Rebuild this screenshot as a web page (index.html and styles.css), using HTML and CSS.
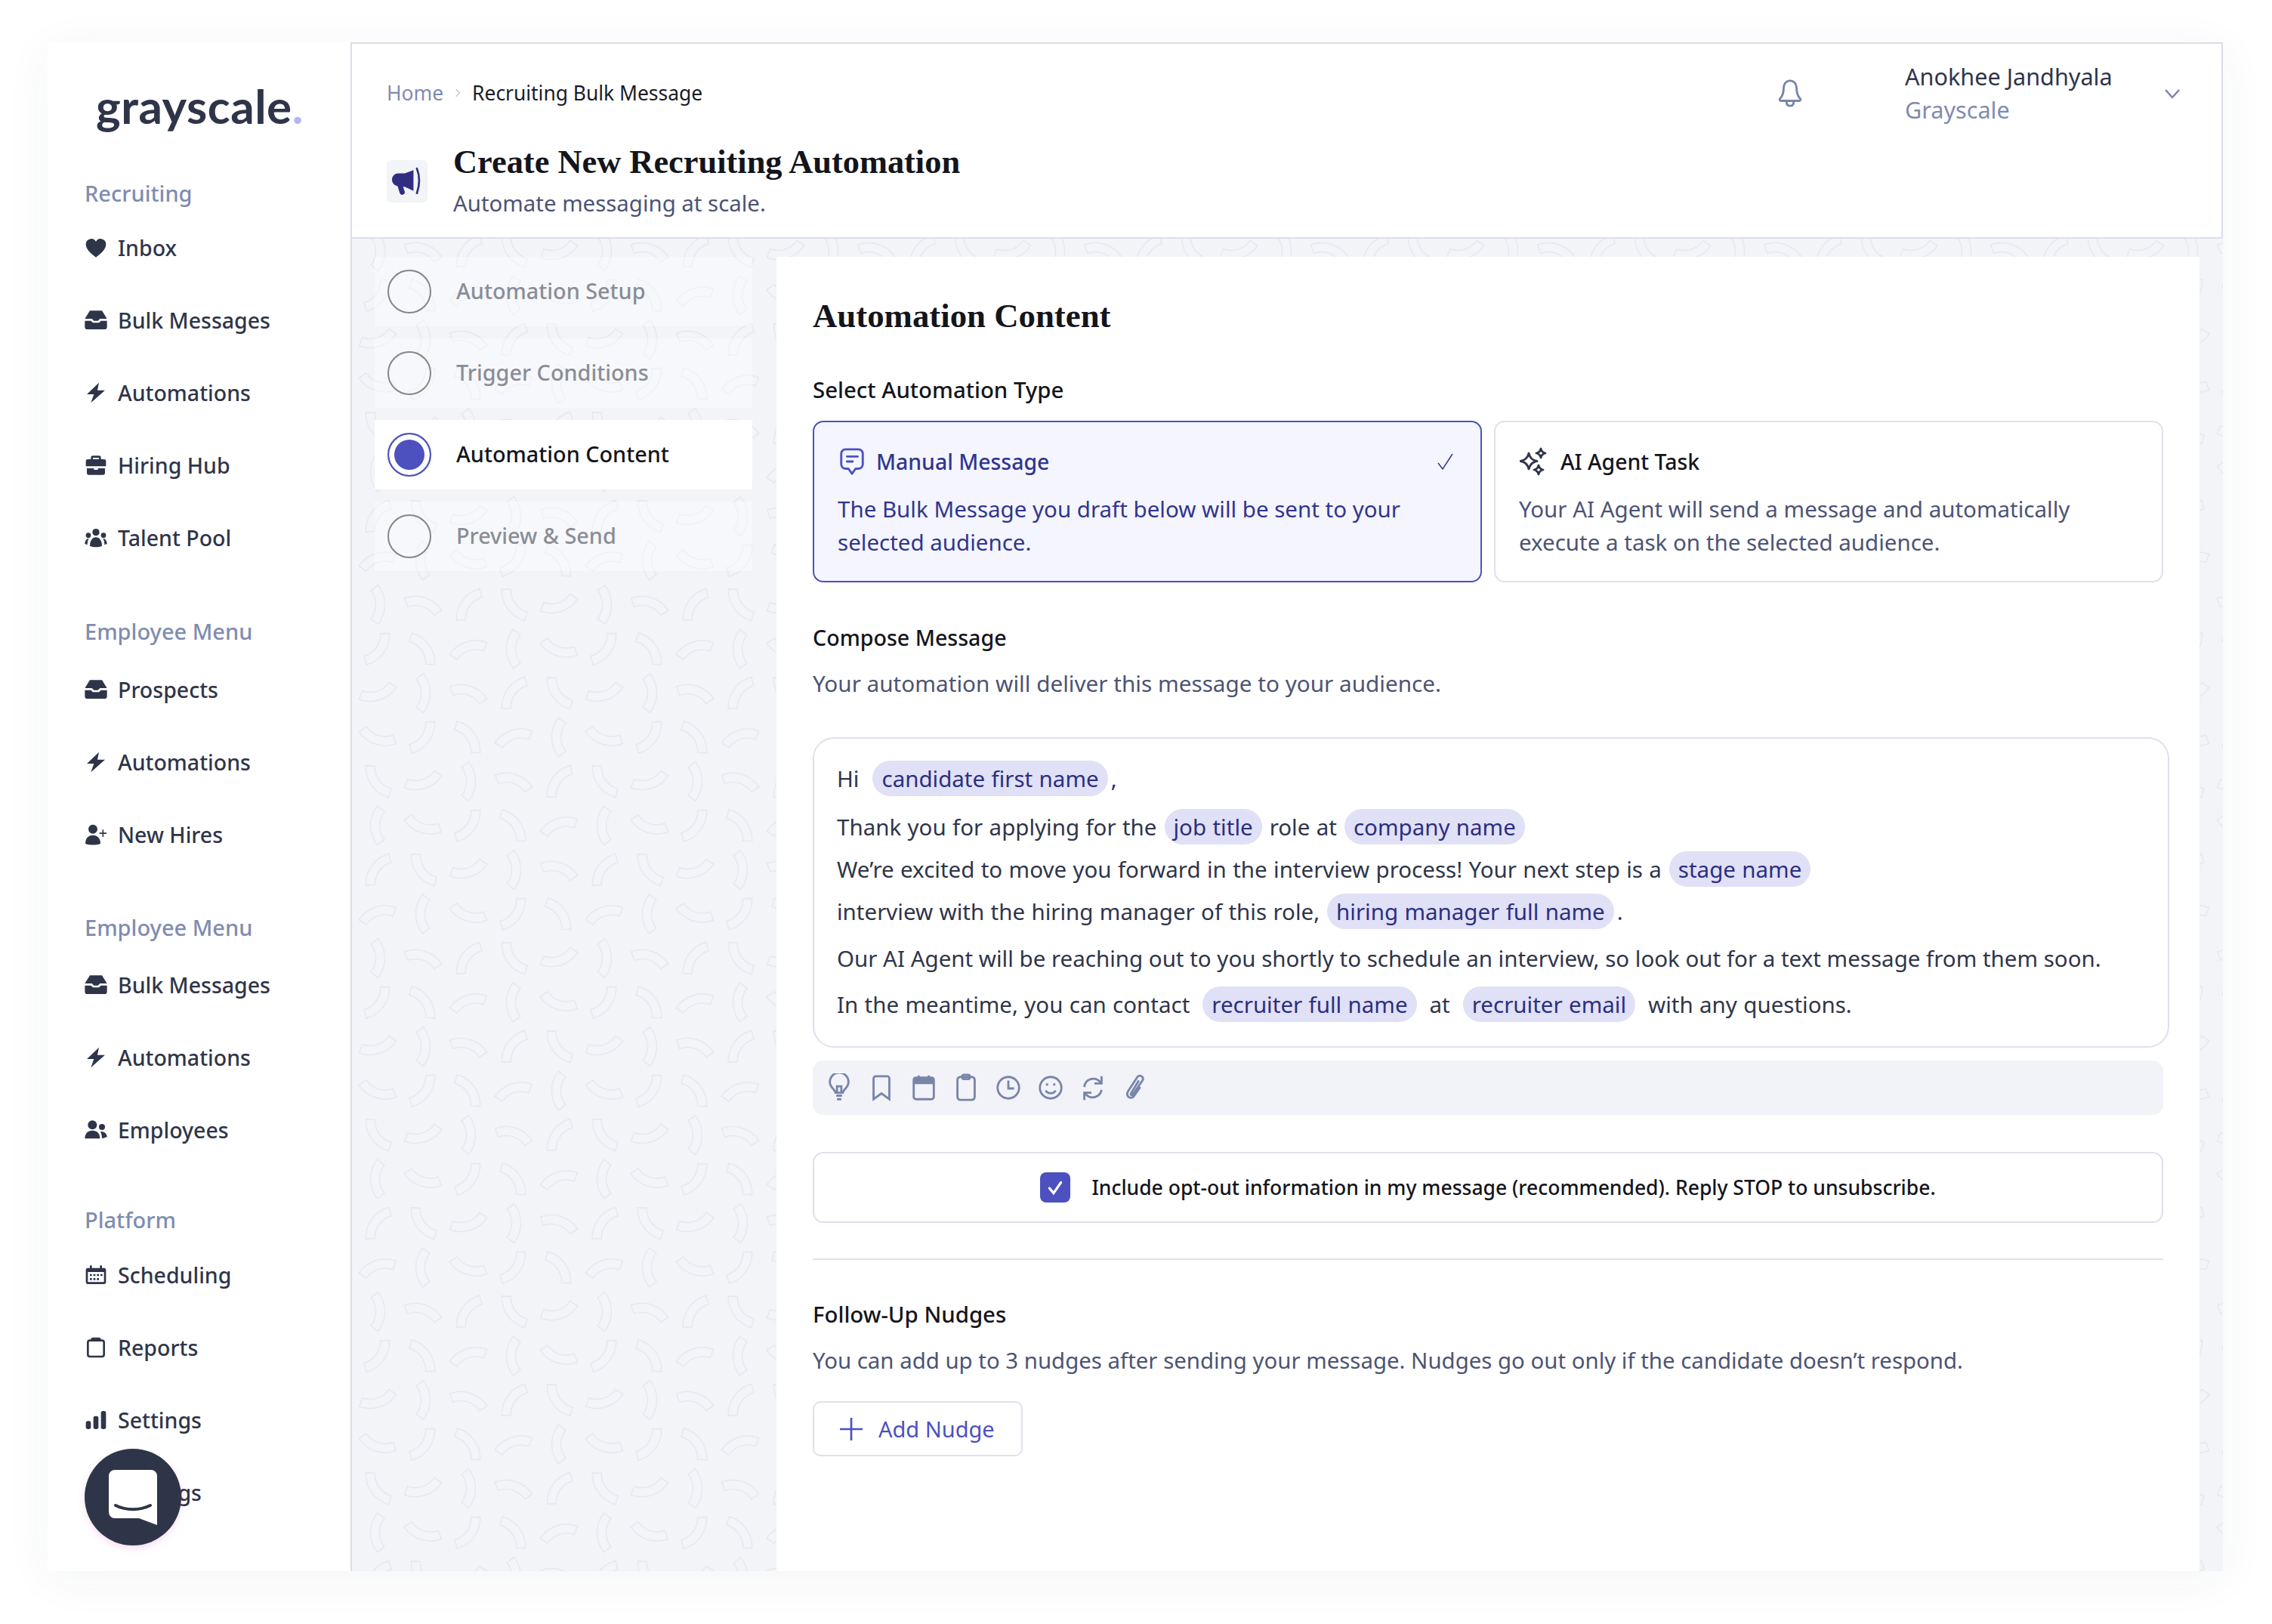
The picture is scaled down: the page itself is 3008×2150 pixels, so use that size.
FILE: index.html
```html
<!DOCTYPE html>
<html lang="en">
<head>
  <meta charset="UTF-8">
  <title>Create New Recruiting Automation</title>
  <link rel="stylesheet" href="styles.css">
</head>
<body>
  <div class="app">
    <!-- Sidebar -->
    <aside class="sidebar">
      <div class="logo">grayscale<span class="logo-dot">.</span></div>

      <div class="nav-group">
        <div class="nav-label">Recruiting</div>
        <a class="nav-item"><svg viewBox="0 0 24 24"><path d="M12 21.500C8 18.500 2 14 2 8.500A5.300 5.300 0 0 1 12 6a5.300 5.300 0 0 1 10 2.500C22 14 16 18.500 12 21.500z"/></svg>Inbox</a>
        <a class="nav-item"><svg viewBox="0 0 24 24"><path d="M6 2.500h12l5 8h-7l-2 2h-4l-2-2H1z"/><path d="M1 12.500h6l2 2h6l2-2h6v6a2.500 2.500 0 0 1-2.500 2.500h-17A2.500 2.500 0 0 1 1 18.500z"/></svg>Bulk Messages</a>
        <a class="nav-item"><svg viewBox="0 0 24 24"><path d="M15 2 3 13.500h7L7 22 21 9.500h-7.500z"/></svg>Automations</a>
        <a class="nav-item"><svg viewBox="0 0 24 24"><path fill-rule="evenodd" d="M9 2.500h6a2 2 0 0 1 2 2V6h3a2 2 0 0 1 2 2v5H2V8a2 2 0 0 1 2-2h3V4.500a2 2 0 0 1 2-2zM9 6h6V4.500H9z"/><path d="M3 15h7v1.500h4V15h7v4.500a2 2 0 0 1-2 2H5a2 2 0 0 1-2-2z"/></svg>Hiring Hub</a>
        <a class="nav-item"><svg viewBox="0 0 24 24"><circle cx="12" cy="6.500" r="3.500"/><circle cx="4.500" cy="9.500" r="2.500"/><circle cx="19.500" cy="9.500" r="2.500"/><path d="M6 20c0-5 2.500-8.500 6-8.500s6 3.500 6 8.500c-3 1.500-9 1.500-12 0z"/><path d="M1 18c0-2.500 1.500-5.500 4-5.500-1 1.500-1.500 4-1.500 6.500zM23 18c0-2.500-1.500-5.500-4-5.500 1 1.500 1.500 4 1.500 6.500z"/></svg>Talent Pool</a>
      </div>

      <div class="nav-group">
        <div class="nav-label">Employee Menu</div>
        <a class="nav-item"><svg viewBox="0 0 24 24"><path d="M6 2.500h12l5 8h-7l-2 2h-4l-2-2H1z"/><path d="M1 12.500h6l2 2h6l2-2h6v6a2.500 2.500 0 0 1-2.500 2.500h-17A2.500 2.500 0 0 1 1 18.500z"/></svg>Prospects</a>
        <a class="nav-item"><svg viewBox="0 0 24 24"><path d="M15 2 3 13.500h7L7 22 21 9.500h-7.500z"/></svg>Automations</a>
        <a class="nav-item"><svg viewBox="0 0 24 24"><circle cx="9" cy="6.500" r="4.500"/><path d="M1.500 21c0-5.500 3-8.500 7.500-8.500s7.500 3 7.500 8.500c-4 1.500-11 1.500-15 0z"/><path d="M18.400 7h1.200v3H22.500v1.200h-2.900v3h-1.200v-3h-3V10h3z"/></svg>New Hires</a>
      </div>

      <div class="nav-group">
        <div class="nav-label">Employee Menu</div>
        <a class="nav-item"><svg viewBox="0 0 24 24"><path d="M6 2.500h12l5 8h-7l-2 2h-4l-2-2H1z"/><path d="M1 12.500h6l2 2h6l2-2h6v6a2.500 2.500 0 0 1-2.500 2.500h-17A2.500 2.500 0 0 1 1 18.500z"/></svg>Bulk Messages</a>
        <a class="nav-item"><svg viewBox="0 0 24 24"><path d="M15 2 3 13.500h7L7 22 21 9.500h-7.500z"/></svg>Automations</a>
        <a class="nav-item"><svg viewBox="0 0 24 24"><circle cx="8.500" cy="7" r="4.500"/><circle cx="18" cy="9" r="3"/><path d="M1 20.500c0-5 3-8 7.500-8s7.500 3 7.500 8z"/><path d="M16.500 13.500c4 0 6.500 2 6.500 5.500l-5 1.500c0-2.500-.5-5-1.500-7z"/></svg>Employees</a>
      </div>

      <div class="nav-group">
        <div class="nav-label">Platform</div>
        <a class="nav-item"><svg viewBox="0 0 24 24"><path fill-rule="evenodd" d="M6 2.500h2V5h8V2.500h2V5h2a2 2 0 0 1 2 2v12a2 2 0 0 1-2 2H4a2 2 0 0 1-2-2V7a2 2 0 0 1 2-2h2zM4 9v10h16V9z"/><path d="M6 11h2v2H6zm3.500 0h2v2h-2zm3.500 0h2v2h-2zm3.500 0h2v2h-2zM6 15h2v2H6zm3.500 0h2v2h-2zm3.500 0h2v2h-2z"/></svg>Scheduling</a>
        <a class="nav-item"><svg viewBox="0 0 24 24"><path fill-rule="evenodd" d="M9 2h6a2 2 0 0 1 2 2h1a3 3 0 0 1 3 3v12a3 3 0 0 1-3 3H6a3 3 0 0 1-3-3V7a3 3 0 0 1 3-3h1a2 2 0 0 1 2-2zM6 6a1 1 0 0 0-1 1v12a1 1 0 0 0 1 1h12a1 1 0 0 0 1-1V7a1 1 0 0 0-1-1z"/></svg>Reports</a>
        <a class="nav-item"><svg viewBox="0 0 24 24"><rect x="2" y="13" width="5" height="8" rx="2"/><rect x="9.500" y="8" width="5" height="13" rx="2"/><rect x="17" y="3" width="5" height="18" rx="2"/></svg>Settings</a>
        <a class="nav-item"><svg viewBox="0 0 24 24"><circle cx="12" cy="12" r="8"/></svg>Settings</a>
      </div>

      <!-- Chat launcher floats above the nav -->
      <div class="chat-bubble">
        <svg viewBox="0 0 64 73"><path fill="#fff" d="M8 0h48a8 8 0 0 1 8 8v65l-24-9H8a8 8 0 0 1-8-8V8a8 8 0 0 1 8-8z"/><path d="M9 47c14 7 32 7 46 0" fill="none" stroke="#2f3549" stroke-width="4" stroke-linecap="round"/></svg>
      </div>
    </aside>

    <div class="content">
      <!-- Top bar -->
      <header class="topbar">
        <div class="topbar-left">
          <div class="crumbs">
            <span class="crumb-home">Home</span>
            <svg class="crumb-sep" viewBox="0 0 10 16"><path d="M2 2l6 6-6 6"/></svg>
            <span>Recruiting Bulk Message</span>
          </div>
          <div class="page-head">
            <div class="page-icon">
              <svg viewBox="0 0 38 38"><path fill="#312e81" d="M27 5v26l-11-5h-2l2 6c.500 2-1 4-3 4s-3-1-3.500-3L7 25C3 24 0 21 0 17c0-5 4-8 8-8h8z"/><path d="M31 2c4 10 4 22 0 33" fill="none" stroke="#312e81" stroke-width="2.500"/></svg>
            </div>
            <div>
              <h1>Create New Recruiting Automation</h1>
              <p class="page-sub">Automate messaging at scale.</p>
            </div>
          </div>
        </div>
        <div class="user-nav">
          <svg class="bell" viewBox="0 0 34 40"><path d="M17 3c-6 0-9 5-9 10 0 7-1 11-5 15-1 1-.500 3 1 3h26c1.500 0 2-2 1-3-4-4-5-8-5-15 0-5-3-10-9-10z"/><path d="M12 32c0 4 2 6 5 6s5-2 5-6"/></svg>
          <div class="user-info">
            <div class="user-name">Anokhee Jandhyala</div>
            <div class="user-org">Grayscale</div>
          </div>
          <svg class="chevron" viewBox="0 0 24 14"><path d="M3 2l9 10 9-10"/></svg>
        </div>
      </header>

      <div class="workspace">
        <!-- Steps -->
        <nav class="steps">
          <div class="step"><span class="step-dot"></span><span class="step-text">Automation Setup</span></div>
          <div class="step"><span class="step-dot"></span><span class="step-text">Trigger Conditions</span></div>
          <div class="step active"><span class="step-dot"></span><span class="step-text">Automation Content</span></div>
          <div class="step"><span class="step-dot"></span><span class="step-text">Preview &amp; Send</span></div>
        </nav>

        <main class="panel">
          <h2>Automation Content</h2>

          <div class="field-title type-title">Select Automation Type</div>
          <div class="type-cards">
            <div class="type-card selected">
              <div class="type-head">
                <svg class="type-icon" viewBox="0 0 36 40"><path fill="none" stroke="#4c51bf" stroke-width="3" stroke-linejoin="round" d="M9 3h18a6 6 0 0 1 6 6v15a6 6 0 0 1-6 6h-4l-5 7-5-7H9a6 6 0 0 1-6-6V9a6 6 0 0 1 6-6z"/><path fill="none" stroke="#4c51bf" stroke-width="3" stroke-linecap="round" d="M11 13h15M11 20h8"/></svg>
                <span>Manual Message</span>
                <svg class="type-check" viewBox="0 0 24 24"><path d="M2 14l6 8L21 2"/></svg>
              </div>
              <p>The Bulk Message you draft below will be sent to your selected audience.</p>
            </div>
            <div class="type-card">
              <div class="type-head">
                <svg class="type-icon ai-icon" viewBox="0 0 38 38"><path d="M12 8Q14 17 23 18.500Q14 20 12 29Q10 20 1 18.500Q10 17 12 8z"/><path d="M28 2Q29 7 34 8Q29 9 28 14Q27 9 22 8Q27 7 28 2z"/><path d="M25 24Q26 29 31 30Q26 31 25 36Q24 31 19 30Q24 29 25 24z"/></svg>
                <span>AI Agent Task</span>
              </div>
              <p>Your AI Agent will send a message and automatically execute a task on the selected audience.</p>
            </div>
          </div>

          <div class="field-title compose-title">Compose Message</div>
          <p class="help">Your automation will deliver this message to your audience.</p>

          <div class="editor">
            <p class="msg-line"><span>Hi</span><span class="chip">candidate first name</span><span class="tail">,</span></p>
            <p class="msg-line spaced"><span>Thank you for applying for the</span><span class="chip">job title</span><span>role at</span><span class="chip">company name</span></p>
            <p class="msg-line"><span>We’re excited to move you forward in the interview process! Your next step is a</span><span class="chip">stage name</span></p>
            <p class="msg-line"><span>interview with the hiring manager of this role,</span><span class="chip">hiring manager full name</span><span class="tail">.</span></p>
            <p class="msg-line full-line"><span>Our AI Agent will be reaching out to you shortly to schedule an interview, so look out for a text message from them soon.</span></p>
            <p class="msg-line wide"><span>In the meantime, you can contact</span><span class="chip">recruiter full name</span><span>at</span><span class="chip">recruiter email</span><span>with any questions.</span></p>
          </div>

          <div class="toolbar">
            <svg viewBox="0 0 32 40"><path d="M11 27c0-4-8-7-8-15a13 13 0 0 1 26 0c0 8-8 11-8 15z"/><path d="M13 27v-9h6v9M12 31h8M13 36h6"/></svg>
            <svg viewBox="0 0 32 40"><path d="M5 7a3 3 0 0 1 3-3h16a3 3 0 0 1 3 3v29l-11-8-11 8z"/></svg>
            <svg viewBox="0 0 32 40"><path d="M9 3v6M23 3v6"/><rect x="2" y="6" width="28" height="30" rx="3"/><path class="tool-fill" d="M2 9a3 3 0 0 1 3-3h22a3 3 0 0 1 3 3v6H2z"/></svg>
            <svg viewBox="0 0 32 40"><rect x="4" y="5" width="24" height="32" rx="4"/><rect x="11" y="2" width="10" height="6" rx="2"/></svg>
            <svg viewBox="0 0 32 40"><circle cx="16" cy="20" r="15"/><path d="M16 10v11h8"/></svg>
            <svg viewBox="0 0 32 40"><circle cx="16" cy="20" r="15"/><path d="M9 24c3 5 11 5 14 0"/><path d="M11 14v3M21 14v3"/></svg>
            <svg viewBox="0 0 32 40"><path d="M4 19C5 8 19 3 27 13"/><path d="M28 4v10H18"/><path d="M28 23C26 33 13 38 5 28"/><path d="M4 37V27h10"/></svg>
            <svg viewBox="0 0 32 40"><path d="M21 10 10 28c-1 2 1 3 2.500 1.500L26 10c3-5-4-9-7-5L6 25c-4 7 4 12 8 7l9-13"/></svg>
          </div>

          <div class="optout">
            <span class="checkbox"><svg viewBox="0 0 24 24"><path d="M5 13l5 6 9-13"/></svg></span>
            <span>Include opt-out information in my message (recommended). Reply STOP to unsubscribe.</span>
          </div>

          <hr class="divider">

          <div class="field-title nudge-title">Follow-Up Nudges</div>
          <p class="help nudge-help">You can add up to 3 nudges after sending your message. Nudges go out only if the candidate doesn’t respond.</p>

          <button class="btn-add"><svg viewBox="0 0 28 28"><path d="M14 0v28M0 14h28"/></svg>Add Nudge</button>
        </main>
      </div>
    </div>
  </div>
</body>
</html>
```
FILE: styles.css
```css
/* Base */
* {
  box-sizing: border-box;
  margin: 0;
  padding: 0;
}
body {
  width: 3008px;
  height: 2150px;
  padding: 56px 0 0 63px;
  overflow: hidden;
  background: #fff;
  font-family: "Noto Sans", "Open Sans", sans-serif;
  font-size: 30px;
  color: #2f3549;
}
.app {
  display: flex;
  width: 2880px;
  height: 2024px;
  background: #fff;
  box-shadow: 0 10px 60px rgba(47, 53, 73, 0.05);
}

/* Sidebar */
.sidebar {
  position: relative;
  width: 403px;
  padding: 46px 0 0 50px;
  border-right: 2px solid #dadeea;
  overflow: hidden;
}
.logo {
  margin-left: 14px;
  font-family: Lato, sans-serif;
  font-size: 62px;
  font-weight: 700;
  line-height: 76px;
  letter-spacing: 0.5px;
  color: #2f3549;
}
.logo-dot {
  color: #b4b4f5;
}
.nav-group {
  margin-top: 57px;
}
.nav-label {
  margin: 0 0 10px -1px;
  font-size: 29px;
  font-weight: 500;
  line-height: 36px;
  color: #7f8cb0;
}
.nav-group:nth-child(2) {
  margin-top: 60px;
}
.nav-group:nth-child(2) .nav-label {
  margin-bottom: 6px;
}
.nav-group:nth-child(3) {
  margin-top: 58px;
}
.nav-group:nth-child(3) .nav-label {
  margin-bottom: 11px;
}
.nav-group:nth-child(5) {
  margin-top: 53px;
}
.nav-group:nth-child(5) .nav-label {
  margin-bottom: 7px;
}
.nav-item {
  display: flex;
  align-items: center;
  gap: 13px;
  height: 96px;
  margin-left: -2px;
  font-size: 28.500px;
  font-weight: 500;
  color: #2f3549;
}
.nav-item svg {
  width: 32px;
  height: 32px;
  fill: #2f3549;
  flex-shrink: 0;
}
.chat-bubble {
  position: absolute;
  left: 49px;
  top: 1862px;
  display: flex;
  align-items: center;
  justify-content: center;
  width: 128px;
  height: 128px;
  border-radius: 50%;
  background: #2f3549;
  box-shadow: 0 4px 10px rgba(225, 130, 190, 0.25);
}
.chat-bubble svg {
  width: 64px;
  height: 73px;
}

/* Top bar */
.content {
  display: flex;
  flex-direction: column;
  flex: 1;
  min-width: 0;
}
.topbar {
  display: flex;
  justify-content: space-between;
  height: 260px;
  padding-left: 46px;
  border: 2px solid #dadeea;
  border-left: none;
}
.topbar-left {
  padding-top: 48px;
}
.crumbs {
  display: flex;
  align-items: center;
  gap: 15px;
  font-size: 26.400px;
  line-height: 34px;
  color: #1a1c26;
}
.crumb-home {
  color: #7f8cb0;
}
.crumb-sep {
  width: 8px;
  height: 14px;
  fill: none;
  stroke: #c5cada;
  stroke-width: 2;
}
.page-head {
  display: flex;
  align-items: center;
  gap: 34px;
  margin-top: 49px;
}
.page-icon {
  display: flex;
  align-items: center;
  justify-content: center;
  width: 54px;
  height: 56px;
  border-radius: 6px;
  background: #f2f4f8;
}
.page-icon svg {
  width: 40px;
  height: 40px;
}
h1 {
  font-family: "Liberation Serif", serif;
  font-size: 44.400px;
  font-weight: 700;
  line-height: 50px;
  color: #14151c;
}
.page-sub {
  margin-top: 8px;
  font-size: 29.400px;
  line-height: 44px;
  color: #4c5474;
}
.user-nav {
  display: flex;
  align-items: center;
  height: 130px;
  padding-right: 53px;
}
.bell {
  width: 34px;
  height: 38px;
  margin-right: 135px;
  fill: none;
  stroke: #7985a8;
  stroke-width: 3;
}
.user-info {
  width: 342px;
  font-size: 30.600px;
  line-height: 44px;
}
.user-name {
  color: #2f3549;
}
.user-org {
  color: #7f8cb0;
}
.chevron {
  width: 24px;
  height: 14px;
  margin-top: 2px;
  fill: none;
  stroke: #7985a8;
  stroke-width: 2.500;
}

/* Workspace with the tiled arc pattern */
.workspace {
  display: flex;
  flex: 1;
  gap: 32px;
  min-height: 0;
  padding: 24px 31px 0 30px;
  overflow: hidden;
  background-color: #f2f4f8;
  background-image: url("data:image/svg+xml,%3Csvg xmlns='http://www.w3.org/2000/svg' xmlns:xlink='http://www.w3.org/1999/xlink' width='300' height='468'%3E%3Cdefs%3E%3Cpath id='a' fill='none' stroke='%23e6e8ee' stroke-width='1.5' d='M-.6-25.900A42 42 0 0 0-.6 25.900L8.900 18.500A30 30 0 0 1 8.900-18.500Z'/%3E%3C/defs%3E%3Cuse xlink:href='%23a' transform='translate(30 29) rotate(0)'/%3E%3Cuse xlink:href='%23a' transform='translate(90 29) rotate(-72)'/%3E%3Cuse xlink:href='%23a' transform='translate(150 29) rotate(-144)'/%3E%3Cuse xlink:href='%23a' transform='translate(210 29) rotate(144)'/%3E%3Cuse xlink:href='%23a' transform='translate(270 29) rotate(72)'/%3E%3Cuse xlink:href='%23a' transform='translate(30 87.500) rotate(36)'/%3E%3Cuse xlink:href='%23a' transform='translate(90 87.500) rotate(-36)'/%3E%3Cuse xlink:href='%23a' transform='translate(150 87.500) rotate(-108)'/%3E%3Cuse xlink:href='%23a' transform='translate(210 87.500) rotate(180)'/%3E%3Cuse xlink:href='%23a' transform='translate(270 87.500) rotate(108)'/%3E%3Cuse xlink:href='%23a' transform='translate(30 146) rotate(72)'/%3E%3Cuse xlink:href='%23a' transform='translate(90 146) rotate(0)'/%3E%3Cuse xlink:href='%23a' transform='translate(150 146) rotate(-72)'/%3E%3Cuse xlink:href='%23a' transform='translate(210 146) rotate(-144)'/%3E%3Cuse xlink:href='%23a' transform='translate(270 146) rotate(144)'/%3E%3Cuse xlink:href='%23a' transform='translate(30 204.500) rotate(180)'/%3E%3Cuse xlink:href='%23a' transform='translate(90 204.500) rotate(108)'/%3E%3Cuse xlink:href='%23a' transform='translate(150 204.500) rotate(36)'/%3E%3Cuse xlink:href='%23a' transform='translate(210 204.500) rotate(-36)'/%3E%3Cuse xlink:href='%23a' transform='translate(270 204.500) rotate(-108)'/%3E%3Cuse xlink:href='%23a' transform='translate(30 263) rotate(-144)'/%3E%3Cuse xlink:href='%23a' transform='translate(90 263) rotate(144)'/%3E%3Cuse xlink:href='%23a' transform='translate(150 263) rotate(72)'/%3E%3Cuse xlink:href='%23a' transform='translate(210 263) rotate(0)'/%3E%3Cuse xlink:href='%23a' transform='translate(270 263) rotate(-72)'/%3E%3Cuse xlink:href='%23a' transform='translate(30 321.500) rotate(-108)'/%3E%3Cuse xlink:href='%23a' transform='translate(90 321.500) rotate(180)'/%3E%3Cuse xlink:href='%23a' transform='translate(150 321.500) rotate(108)'/%3E%3Cuse xlink:href='%23a' transform='translate(210 321.500) rotate(36)'/%3E%3Cuse xlink:href='%23a' transform='translate(270 321.500) rotate(-36)'/%3E%3Cuse xlink:href='%23a' transform='translate(30 380) rotate(-72)'/%3E%3Cuse xlink:href='%23a' transform='translate(90 380) rotate(-144)'/%3E%3Cuse xlink:href='%23a' transform='translate(150 380) rotate(144)'/%3E%3Cuse xlink:href='%23a' transform='translate(210 380) rotate(72)'/%3E%3Cuse xlink:href='%23a' transform='translate(270 380) rotate(0)'/%3E%3Cuse xlink:href='%23a' transform='translate(30 438.500) rotate(-36)'/%3E%3Cuse xlink:href='%23a' transform='translate(90 438.500) rotate(-108)'/%3E%3Cuse xlink:href='%23a' transform='translate(150 438.500) rotate(180)'/%3E%3Cuse xlink:href='%23a' transform='translate(210 438.500) rotate(108)'/%3E%3Cuse xlink:href='%23a' transform='translate(270 438.500) rotate(36)'/%3E%3C/svg%3E");
  background-position: 4px 280px;
}

/* Steps */
.steps {
  display: flex;
  flex-direction: column;
  gap: 16px;
  flex-shrink: 0;
  width: 500px;
}
.step {
  display: flex;
  align-items: center;
  gap: 33px;
  height: 92px;
  padding-left: 17px;
  background: rgba(255, 255, 255, 0.4);
  font-size: 28.800px;
  font-weight: 500;
  color: #8a8d96;
}
.step-text {
  margin-bottom: 4px;
}
.step-dot {
  flex-shrink: 0;
  width: 58px;
  height: 58px;
  border: 2px solid #85868c;
  border-radius: 50%;
}
.step.active {
  background: #fff;
  color: #14151c;
}
.step.active .step-dot {
  border-color: #4c51bf;
  background: #4c51bf;
  box-shadow: inset 0 0 0 7px #fff;
}

/* Main panel */
.panel {
  flex: 1;
  min-width: 0;
  padding: 50px 48px 0 48px;
  background: #fff;
}
h2 {
  font-family: "Liberation Serif", serif;
  font-size: 44.800px;
  font-weight: 700;
  line-height: 56px;
  color: #14151c;
}
.field-title {
  font-size: 29.400px;
  font-weight: 500;
  line-height: 40px;
  color: #14151c;
}
.type-title {
  margin-top: 50px;
}
.compose-title {
  margin-top: 53px;
  font-size: 28.600px;
}
.nudge-title {
  margin-top: 52px;
}
.help {
  margin-top: 21px;
  font-size: 29.700px;
  line-height: 40px;
  color: #4c5474;
}
.nudge-help {
  font-size: 29.400px;
}
.type-cards {
  display: flex;
  gap: 16px;
  margin-top: 21px;
}
.type-card {
  flex: 1;
  padding: 32px 32px 29px 31px;
  border: 2px solid #dfe1ec;
  border-radius: 14px;
  color: #4c5474;
}
.type-card p {
  margin-top: 21px;
  font-size: 29.500px;
  line-height: 44px;
}
.type-card.selected {
  border-color: #4c51bf;
  background: #f4f5fe;
  color: #31358f;
}
.type-head {
  display: flex;
  align-items: center;
  gap: 14px;
  height: 40px;
  font-size: 28.400px;
  font-weight: 500;
  color: #14151c;
}
.selected .type-head {
  color: #31358f;
}
.type-icon {
  width: 36px;
  height: 38px;
  margin-left: 1px;
}
.ai-icon {
  width: 38px;
  margin-right: 2px;
  fill: none;
  stroke: #2f3549;
  stroke-width: 2.800;
  stroke-linejoin: round;
}
.type-check {
  width: 24px;
  height: 24px;
  margin-left: auto;
  margin-right: 2px;
  fill: none;
  stroke: #31358f;
  stroke-width: 1.500;
}

/* Message editor */
.editor {
  height: 411px;
  margin: 51px -8px 0 0;
  padding: 29px 30px 0;
  border: 2px solid #dfe1ec;
  border-radius: 28px;
}
.msg-line {
  display: flex;
  align-items: center;
  gap: 10px;
  height: 47px;
  margin-top: 9px;
  font-size: 29.500px;
  word-spacing: 0.7px;
  white-space: pre;
}
.msg-line:first-child {
  gap: 18px;
  margin-top: 0;
}
.msg-line.spaced {
  margin-top: 17px;
}
.msg-line.full-line {
  margin-top: 15px;
  word-spacing: 0;
}
.msg-line.wide {
  gap: 17px;
  margin-top: 14px;
}
.chip {
  display: inline-block;
  padding: 0 12px;
  border-radius: 24px;
  background: #e0e0f6;
  color: #2b2f7f;
  font-size: 29.500px;
  line-height: 47px;
}
.msg-line .tail {
  margin-left: -6px;
  color: #2b2f7f;
}
.msg-line:first-child .tail {
  margin-left: -14px;
}

/* Toolbar under the editor */
.toolbar {
  display: flex;
  align-items: center;
  gap: 24px;
  height: 72px;
  margin-top: 17px;
  padding-left: 19px;
  border-radius: 14px;
  background: #f2f3f8;
}
.toolbar svg {
  width: 32px;
  height: 38px;
  fill: none;
  stroke: #7985a8;
  stroke-width: 3;
}
.toolbar .tool-fill {
  fill: #7985a8;
  stroke: none;
}

/* Opt-out row */
.optout {
  display: flex;
  align-items: center;
  justify-content: center;
  gap: 28px;
  height: 94px;
  margin-top: 49px;
  border: 2px solid #dfe1ec;
  border-radius: 14px;
  font-size: 26.500px;
  font-weight: 500;
  color: #14151c;
}
.checkbox {
  display: flex;
  align-items: center;
  justify-content: center;
  width: 40px;
  height: 40px;
  border-radius: 8px;
  background: #4c51bf;
}
.checkbox svg {
  width: 26px;
  height: 26px;
  fill: none;
  stroke: #fff;
  stroke-width: 3;
  stroke-linecap: round;
}
.divider {
  height: 2px;
  margin-top: 47px;
  border: none;
  background: #dfe1ec;
}

/* Add nudge button */
.btn-add {
  display: flex;
  align-items: center;
  gap: 21px;
  width: 278px;
  height: 73px;
  margin-top: 34px;
  padding-left: 34px;
  border: 2px solid #dfe1ec;
  border-radius: 10px;
  background: #fff;
  font-family: inherit;
  font-size: 29px;
  color: #4c51bf;
}
.btn-add svg {
  width: 30px;
  height: 30px;
  fill: none;
  stroke: #4c51bf;
  stroke-width: 2.500;
}
```
